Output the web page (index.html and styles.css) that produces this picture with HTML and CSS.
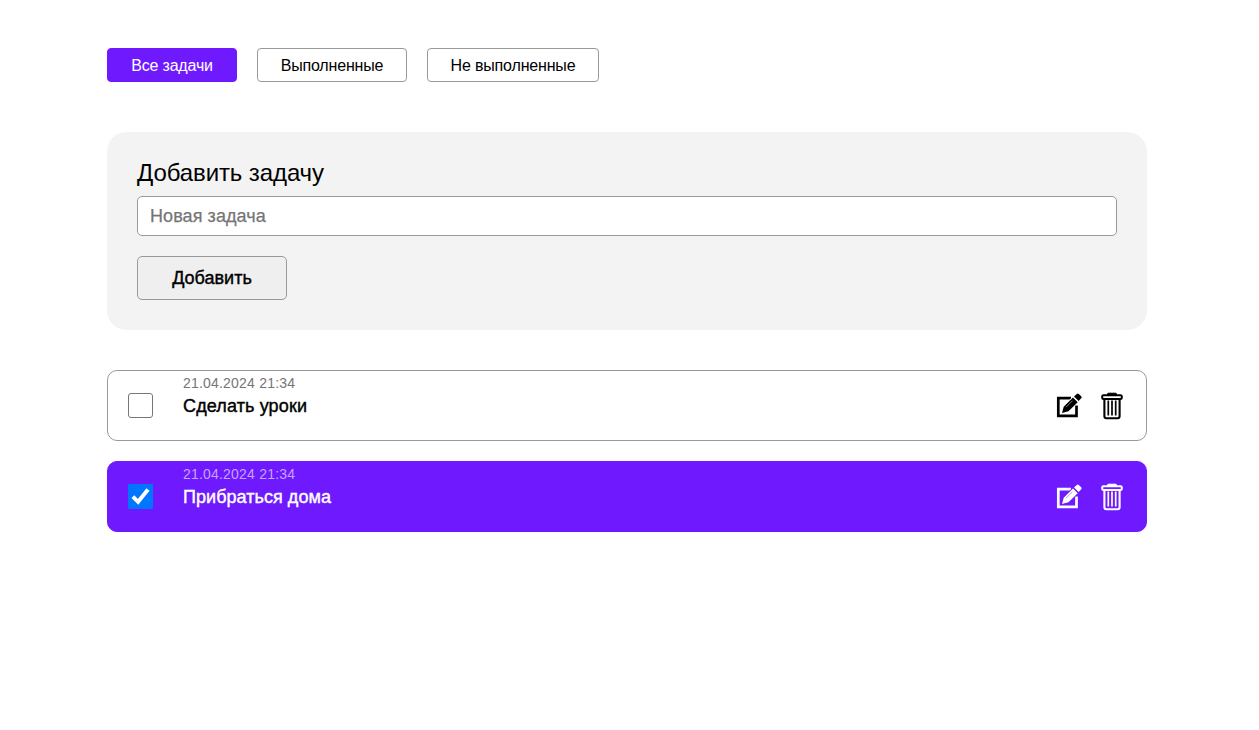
FILE: index.html
```html
<!DOCTYPE html>
<html lang="ru">
<head>
<meta charset="utf-8">
<title>Задачи</title>
<link rel="stylesheet" href="styles.css">
</head>
<body>
<svg class="sprite" width="0" height="0">
  <symbol id="edit" viewBox="0 0 26 26">
    <path d="M15 5.100H2.300V22.900h18.200V12.500" fill="none" stroke="currentColor" stroke-width="2.700"/>
    <path class="halo" d="M6 20l1.700-6.300L17 4.500l4.500 4.500-9.200 9.300z" stroke-width="1.800"/>
    <path d="M6 20l1.700-6.300L17 4.500l4.700 4.700-9.200 9.100zM18 3.500L20.800.900q1-.9 2 0l2.400 2.400q.9.900 0 1.900l-2.600 2.900z" fill="currentColor"/>
    <path class="gap" d="M10 14.200l6.500-6.500" fill="none" stroke-width=".5"/>
  </symbol>
  <symbol id="trash" viewBox="0 0 22 28">
    <path d="M6.500 3V1.900Q6.500 1.200 7.500 1.200h7q1 0 1 .7V3" fill="currentColor" stroke="currentColor"/>
    <rect x="1.200" y="3.200" width="19.600" height="3.800" rx="1.300" fill="none" stroke="currentColor" stroke-width="2"/>
    <path d="M3.400 8v16.300q0 2 2 2h11.200q2 0 2-2V8" fill="none" stroke="currentColor" stroke-width="2.100"/>
    <path d="M7.300 8.500v15M11 8.500v15M14.700 8.500v15" stroke="currentColor" stroke-width="1.700"/>
  </symbol>
</svg>
<main class="container">
  <nav class="filters">
    <button class="filter filter-all active">Все задачи</button>
    <button class="filter filter-done">Выполненные</button>
    <button class="filter filter-open">Не выполненные</button>
  </nav>
  <form class="add-form">
    <label class="add-title" for="task">Добавить задачу</label>
    <input class="add-input" id="task" type="text" placeholder="Новая задача">
    <button class="add-button" type="button">Добавить</button>
  </form>
  <ul class="tasks">
    <li class="task">
      <span class="check"></span>
      <div class="task-body">
        <time class="task-date">21.04.2024 21:34</time>
        <span class="task-name first-name">Сделать уроки</span>
      </div>
      <svg class="icon-edit"><use href="#edit"/></svg>
      <svg class="icon-trash"><use href="#trash"/></svg>
    </li>
    <li class="task done">
      <span class="check"><svg viewBox="0 0 25 25" width="25" height="25"><path d="M4.900 12.700l5.200 5.100L20 5.500" fill="none" stroke="#fff" stroke-width="3.900"/></svg></span>
      <div class="task-body">
        <time class="task-date">21.04.2024 21:34</time>
        <span class="task-name">Прибраться дома</span>
      </div>
      <svg class="icon-edit"><use href="#edit"/></svg>
      <svg class="icon-trash"><use href="#trash"/></svg>
    </li>
  </ul>
</main>
</body>
</html>
```
FILE: styles.css
```css
* { box-sizing: border-box; }
body { margin: 0; background: #fff; color: #000; font-family: "Liberation Sans", Arial, sans-serif; }
.sprite { position: absolute; }
.container { width: 1040px; margin: 0 0 0 107px; padding-top: 48px; }
.filters { display: flex; gap: 20px; }
.filter { height: 34px; padding: 1px 0 0; border: 1px solid #999; border-radius: 4px; background: #fff; color: #000; font: 16px/31px "Liberation Sans", Arial, sans-serif; letter-spacing: -.17px; white-space: nowrap; }
.filter-all { width: 130px; }
.filter-done { width: 150px; }
.filter-open { width: 172px; }
.filter.active { background: #6f19ff; border-color: #6f19ff; color: #fff; }
.add-form { display: flex; flex-direction: column; align-items: flex-start; height: 198px; margin-top: 50px; padding: 26px 30px 30px; border-radius: 20px; background: #f3f3f3; }
.add-title { height: 38px; font-size: 24px; line-height: 30px; letter-spacing: -.1px; }
.add-input { width: 100%; height: 40px; padding: 0 12px; border: 1px solid #999; border-radius: 5px; background: #fff; font: 18px "Liberation Sans", Arial, sans-serif; letter-spacing: .08px; outline: none; }
.add-input::placeholder { color: #757575; opacity: 1; -webkit-text-stroke: .25px #757575; }
.add-button { width: 150px; height: 44px; margin-top: 20px; padding: 0; border: 1px solid #999; border-radius: 5px; background: #efefef; color: #000; font: 18px "Liberation Sans", Arial, sans-serif; -webkit-text-stroke: .4px currentColor; }
.tasks { display: flex; flex-direction: column; gap: 20px; margin: 40px 0 0; padding: 0; list-style: none; }
.task { display: flex; align-items: center; height: 71px; padding: 0 23px 0 20px; border: 1px solid #999; border-radius: 10px; --surface: #fff; }
.task.done { background: #6f19ff; border-color: #6f19ff; color: #fff; --surface: #6f19ff; }
.check { width: 25px; height: 25px; border: 1px solid #767676; border-radius: 3px; background: #fff; }
.done .check { border: 0; border-radius: 1px; background: #0075ff; }
.check svg { display: block; }
.task-body { display: flex; flex: 1; flex-direction: column; align-self: flex-start; margin-left: 30px; padding-top: 4px; }
.task-date { color: #757575; font-size: 14px; line-height: 17px; letter-spacing: .2px; }
.done .task-date { color: #c5a3ff; }
.task-name { margin-top: 4px; font-size: 18px; line-height: 20px; letter-spacing: .05px; -webkit-text-stroke: .4px currentColor; }
.first-name { letter-spacing: .13px; }
.icon-edit { width: 26px; height: 26px; margin-right: 19px; }
.icon-trash { width: 22px; height: 28px; }
.gap { stroke: var(--surface); }
.halo { fill: var(--surface); stroke: var(--surface); }
```
